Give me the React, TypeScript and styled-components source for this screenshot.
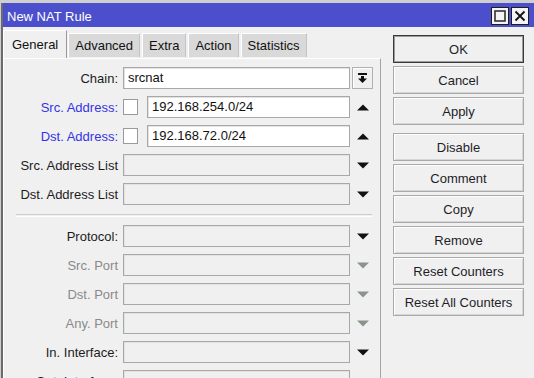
import React, { FC } from 'react';
import styled, { createGlobalStyle } from 'styled-components';

type Tone = 'normal' | 'link' | 'muted';
type Trail = 'combo' | 'up' | 'down' | 'downMuted';

interface Field {
  label: string;
  tone: Tone;
  value?: string;
  check?: boolean;
  trail: Trail;
}

const topFields: Field[] = [
  { label: 'Chain:', tone: 'normal', value: 'srcnat', trail: 'combo' },
  { label: 'Src. Address:', tone: 'link', value: '192.168.254.0/24', check: true, trail: 'up' },
  { label: 'Dst. Address:', tone: 'link', value: '192.168.72.0/24', check: true, trail: 'up' },
  { label: 'Src. Address List', tone: 'normal', trail: 'down' },
  { label: 'Dst. Address List', tone: 'normal', trail: 'down' },
];

const bottomFields: Field[] = [
  { label: 'Protocol:', tone: 'normal', trail: 'down' },
  { label: 'Src. Port', tone: 'muted', trail: 'downMuted' },
  { label: 'Dst. Port', tone: 'muted', trail: 'downMuted' },
  { label: 'Any. Port', tone: 'muted', trail: 'downMuted' },
  { label: 'In. Interface:', tone: 'normal', trail: 'down' },
  { label: 'Out. Interface:', tone: 'normal', trail: 'down' },
];

const tabs = ['General', 'Advanced', 'Extra', 'Action', 'Statistics'];

const actions = [
  ['OK', 'Cancel', 'Apply'],
  ['Disable', 'Comment', 'Copy', 'Remove', 'Reset Counters', 'Reset All Counters'],
];

const GlobalStyle = createGlobalStyle`
  html, body {
    margin: 0;
    padding: 0;
    background: #cfcfcf;
    overflow: hidden;
  }
  body {
    font-family: "Liberation Sans", Arial, sans-serif;
    font-size: 13px;
    color: #1c1c1c;
  }
`;

const Window = styled.div`
  margin: 3px 0 0 1px;
  height: 375px;
  border-left: 2px solid #6b6b6b;
  background: #f0f0f0;
  display: flex;
  flex-direction: column;
`;

const TitleBar = styled.div`
  height: 24px;
  flex-shrink: 0;
  background: #4b4fcb;
  display: flex;
  align-items: flex-start;
  justify-content: space-between;
  padding: 0 5px 0 4px;
`;

const TitleText = styled.span`
  color: #fff;
  font-size: 13px;
  line-height: 17px;
  padding-top: 5px;
`;

const TitleButtons = styled.div`
  display: flex;
  gap: 2px;
  padding-top: 4px;
`;

const TitleButton = styled.div`
  width: 16px;
  height: 16px;
  border: 1px solid #1e1e1e;
  background: #f4f4f4;
  display: flex;
  align-items: center;
  justify-content: center;
`;

const Content = styled.div`
  display: flex;
  padding-top: 3px;
`;

const LeftColumn = styled.div`
  width: 378px;
  display: flex;
  flex-direction: column;
`;

const TabBar = styled.div`
  height: 28px;
  display: flex;
  align-items: flex-end;
`;

const Tab = styled.div<{ $active?: boolean }>`
  height: ${(p) => (p.$active ? 28 : 24)}px;
  margin-left: ${(p) => (p.$active ? 0 : 2)}px;
  margin-bottom: ${(p) => (p.$active ? 0 : 1)}px;
  padding: 0 ${(p) => (p.$active ? 8 : 6)}px;
  background: ${(p) => (p.$active ? '#f0f0f0' : '#d9d9d9')};
  border-top: 1px solid #fff;
  border-left: 1px solid #fff;
  border-right: 1px solid ${(p) => (p.$active ? '#9a9a9a' : '#c4c4c4')};
  display: flex;
  align-items: center;
  color: #111;
  line-height: 16px;
  box-sizing: border-box;
  &:nth-child(2) {
    margin-left: 1px;
  }
`;

const Panel = styled.div`
  border-top: 1px solid #fff;
  border-left: 1px solid #fff;
  border-right: 1px solid #a4a4a4;
  padding-top: 8px;
  display: flex;
  flex-direction: column;
  gap: 7px;
  height: 330px;
`;

const Row = styled.div`
  display: flex;
  align-items: center;
  height: 22px;
  flex-shrink: 0;
`;

const Label = styled.span<{ $tone: Tone }>`
  width: 114px;
  margin-right: 5px;
  text-align: right;
  white-space: nowrap;
  color: ${(p) => (p.$tone === 'link' ? '#3434e6' : p.$tone === 'muted' ? '#8a8a8a' : '#1c1c1c')};
`;

const CheckBox = styled.span`
  width: 13px;
  height: 14px;
  background: #fff;
  border: 1px solid #9a9a9a;
  margin-right: 9px;
`;

const Input = styled.div<{ $filled: boolean }>`
  flex: 1;
  height: 22px;
  box-sizing: border-box;
  border: 1px solid #a8a8a8;
  box-shadow: inset 1px 1px 0 #e2e2e2;
  background: ${(p) => (p.$filled ? '#fff' : '#f0f0f0')};
  padding: 0 4px;
  line-height: 20px;
  color: #111;
`;

const Trailing = styled.div`
  width: 30px;
  height: 22px;
  flex-shrink: 0;
  display: flex;
  align-items: center;
  padding-left: 7px;
  box-sizing: border-box;
`;

const ComboButton = styled.div`
  width: 21px;
  height: 22px;
  margin-left: -5px;
  box-sizing: border-box;
  border: 1px solid #b0b0b0;
  box-shadow: inset 1px 1px 0 #fff;
  display: flex;
  align-items: center;
  justify-content: center;
`;

const Separator = styled.div`
  height: 1px;
  margin: 2px 8px 1px 12px;
  border-top: 1px solid #cdcdcd;
  border-bottom: 1px solid #fff;
  flex-shrink: 0;
`;

const ButtonColumn = styled.div`
  width: 131px;
  margin: 5px 0 0 12px;
  display: flex;
  flex-direction: column;
  gap: 8px;
`;

const ButtonGroup = styled.div`
  display: flex;
  flex-direction: column;
  gap: 3px;
`;

const ActionButton = styled.div<{ $default?: boolean }>`
  height: 28px;
  box-sizing: border-box;
  border: 1px solid ${(p) => (p.$default ? '#3a3a3a' : '#a9a9a9')};
  box-shadow: ${(p) =>
    p.$default ? 'inset 0 0 0 1px #9c9c9c' : 'inset 1px 1px 0 #fff, inset -1px -1px 0 #d6d6d6'};
  display: flex;
  align-items: center;
  justify-content: center;
  color: #1e1e28;
`;

const Triangle: FC<{ dir: 'up' | 'down'; color: string }> = ({ dir, color }) => (
  <svg width="12" height="7" viewBox="0 0 12 7">
    <polygon points={dir === 'up' ? '0,6.5 12,6.5 6,0.5' : '0,0.5 12,0.5 6,6.5'} fill={color} />
  </svg>
);

const ComboIcon: FC = () => (
  <svg width="9" height="10" viewBox="0 0 9 10">
    <rect x="0" y="0" width="9" height="2" fill="#111" />
    <rect x="3" y="3" width="3" height="3" fill="#111" />
    <polygon points="0,5.5 9,5.5 4.5,10" fill="#111" />
  </svg>
);

const FieldRow: FC<{ field: Field }> = ({ field }) => (
  <Row>
    <Label $tone={field.tone}>{field.label}</Label>
    {field.check && <CheckBox />}
    <Input $filled={!!field.value}>{field.value}</Input>
    <Trailing>
      {field.trail === 'combo' && (
        <ComboButton>
          <ComboIcon />
        </ComboButton>
      )}
      {field.trail === 'up' && <Triangle dir="up" color="#111" />}
      {field.trail === 'down' && <Triangle dir="down" color="#111" />}
      {field.trail === 'downMuted' && <Triangle dir="down" color="#8b938b" />}
    </Trailing>
  </Row>
);

export default function App() {
  return (
    <>
      <GlobalStyle />
      <Window>
        <TitleBar>
          <TitleText>New NAT Rule</TitleText>
          <TitleButtons>
            <TitleButton>
              <svg width="12" height="12" viewBox="0 0 12 12">
                <rect x="1" y="1" width="10" height="10" fill="none" stroke="#333" strokeWidth="1.6" />
              </svg>
            </TitleButton>
            <TitleButton>
              <svg width="12" height="12" viewBox="0 0 12 12">
                <path d="M1.5 1.5 L10.5 10.5 M10.5 1.5 L1.5 10.5" stroke="#111" strokeWidth="1.8" />
              </svg>
            </TitleButton>
          </TitleButtons>
        </TitleBar>
        <Content>
          <LeftColumn>
            <TabBar>
              {tabs.map((t, i) => (
                <Tab key={t} $active={i === 0}>
                  {t}
                </Tab>
              ))}
            </TabBar>
            <Panel>
              {topFields.map((f) => (
                <FieldRow key={f.label} field={f} />
              ))}
              <Separator />
              {bottomFields.map((f) => (
                <FieldRow key={f.label} field={f} />
              ))}
            </Panel>
          </LeftColumn>
          <ButtonColumn>
            {actions.map((group, gi) => (
              <ButtonGroup key={gi}>
                {group.map((b) => (
                  <ActionButton key={b} $default={b === 'OK'}>
                    {b}
                  </ActionButton>
                ))}
              </ButtonGroup>
            ))}
          </ButtonColumn>
        </Content>
      </Window>
    </>
  );
}
